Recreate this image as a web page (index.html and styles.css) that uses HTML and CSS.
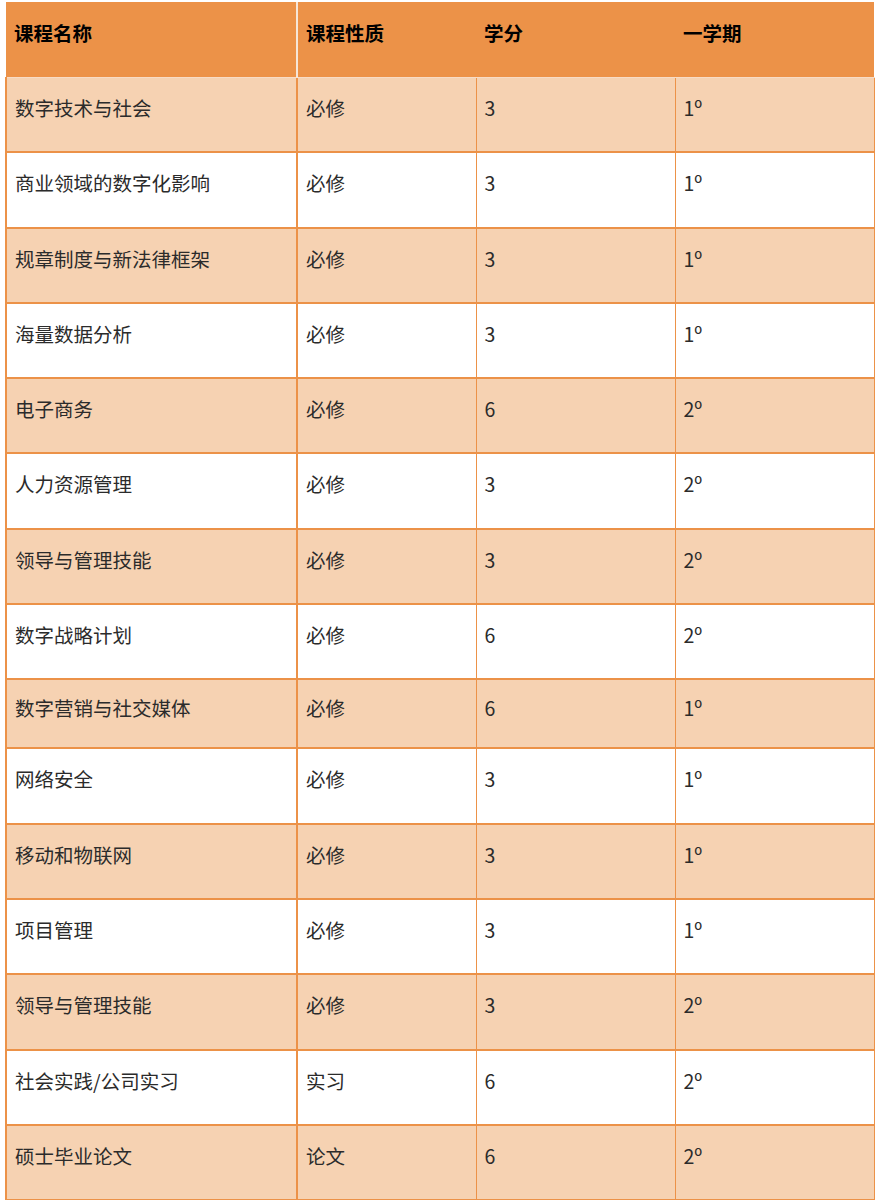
FILE: index.html
```html
<!DOCTYPE html>
<html lang="zh">
<head>
<meta charset="utf-8">
<link rel="stylesheet" href="styles.css">
</head>
<body>
<table class="course-table">
  <colgroup>
    <col class="c-name"><col class="c-type"><col class="c-credit"><col class="c-term">
  </colgroup>
  <thead>
    <tr class="head-row">
      <th class="th-first">课程名称</th><th>课程性质</th><th>学分</th><th>一学期</th>
    </tr>
  </thead>
  <tbody>
    <tr class="shade"><td>数字技术与社会</td><td>必修</td><td>3</td><td>1º</td></tr>
    <tr><td>商业领域的数字化影响</td><td>必修</td><td>3</td><td>1º</td></tr>
    <tr class="shade"><td>规章制度与新法律框架</td><td>必修</td><td>3</td><td>1º</td></tr>
    <tr><td>海量数据分析</td><td>必修</td><td>3</td><td>1º</td></tr>
    <tr class="shade"><td>电子商务</td><td>必修</td><td>6</td><td>2º</td></tr>
    <tr><td>人力资源管理</td><td>必修</td><td>3</td><td>2º</td></tr>
    <tr class="shade"><td>领导与管理技能</td><td>必修</td><td>3</td><td>2º</td></tr>
    <tr><td>数字战略计划</td><td>必修</td><td>6</td><td>2º</td></tr>
    <tr class="shade short"><td>数字营销与社交媒体</td><td>必修</td><td>6</td><td>1º</td></tr>
    <tr><td>网络安全</td><td>必修</td><td>3</td><td>1º</td></tr>
    <tr class="shade"><td>移动和物联网</td><td>必修</td><td>3</td><td>1º</td></tr>
    <tr><td>项目管理</td><td>必修</td><td>3</td><td>1º</td></tr>
    <tr class="shade"><td>领导与管理技能</td><td>必修</td><td>3</td><td>2º</td></tr>
    <tr><td>社会实践/公司实习</td><td>实习</td><td>6</td><td>2º</td></tr>
    <tr class="shade"><td>硕士毕业论文</td><td>论文</td><td>6</td><td>2º</td></tr>
  </tbody>
</table>
</body>
</html>
```

FILE: styles.css
```css
html, body {
  margin: 0;
  padding: 0;
  background: #ffffff;
}
body {
  padding: 2px 0 0 5px;
  font-family: "Noto Sans CJK SC", "Noto Sans", sans-serif;
}
.course-table {
  border-collapse: collapse;
  table-layout: fixed;
  width: 868px;
}
.c-name { width: 291px; }
.c-type { width: 179px; }
.c-credit { width: 199px; }
.c-term { width: 199px; }

.head-row th {
  background: #ec9248;
  color: #000;
  font-weight: 700;
  font-size: 19.5px;
  line-height: 22px;
  text-align: left;
  vertical-align: top;
  height: 75px;
  padding: 20px 8px 0 8px;
  box-sizing: border-box;
  border: none;
  border-bottom: 1px solid #f8dcc6;
}
.head-row th.th-first {
  border-right: 2px solid #f6e6d8;
}
.course-table td {
  font-size: 19.5px;
  line-height: 22px;
  color: #2b2b2b;
  vertical-align: top;
  height: 75.3px;
  box-sizing: border-box;
  padding: 19px 8px 0 8px;
  border: 1px solid #ec9248;
  border-top-width: 2px;
  border-bottom-width: 2px;
  background: #ffffff;
}
.course-table td:first-child {
  border-left: 2px solid #ec9248;
  border-right: 2px solid #ec9248;
}
.course-table td:last-child {
  border-right: 1px solid #ec9248;
}
.course-table tr.shade td {
  background: #f6d2b2;
}
.course-table tr.short td {
  height: 69px;
  padding-top: 17px;
}
.course-table tbody tr:first-child td {
  border-top: none;
}
```
